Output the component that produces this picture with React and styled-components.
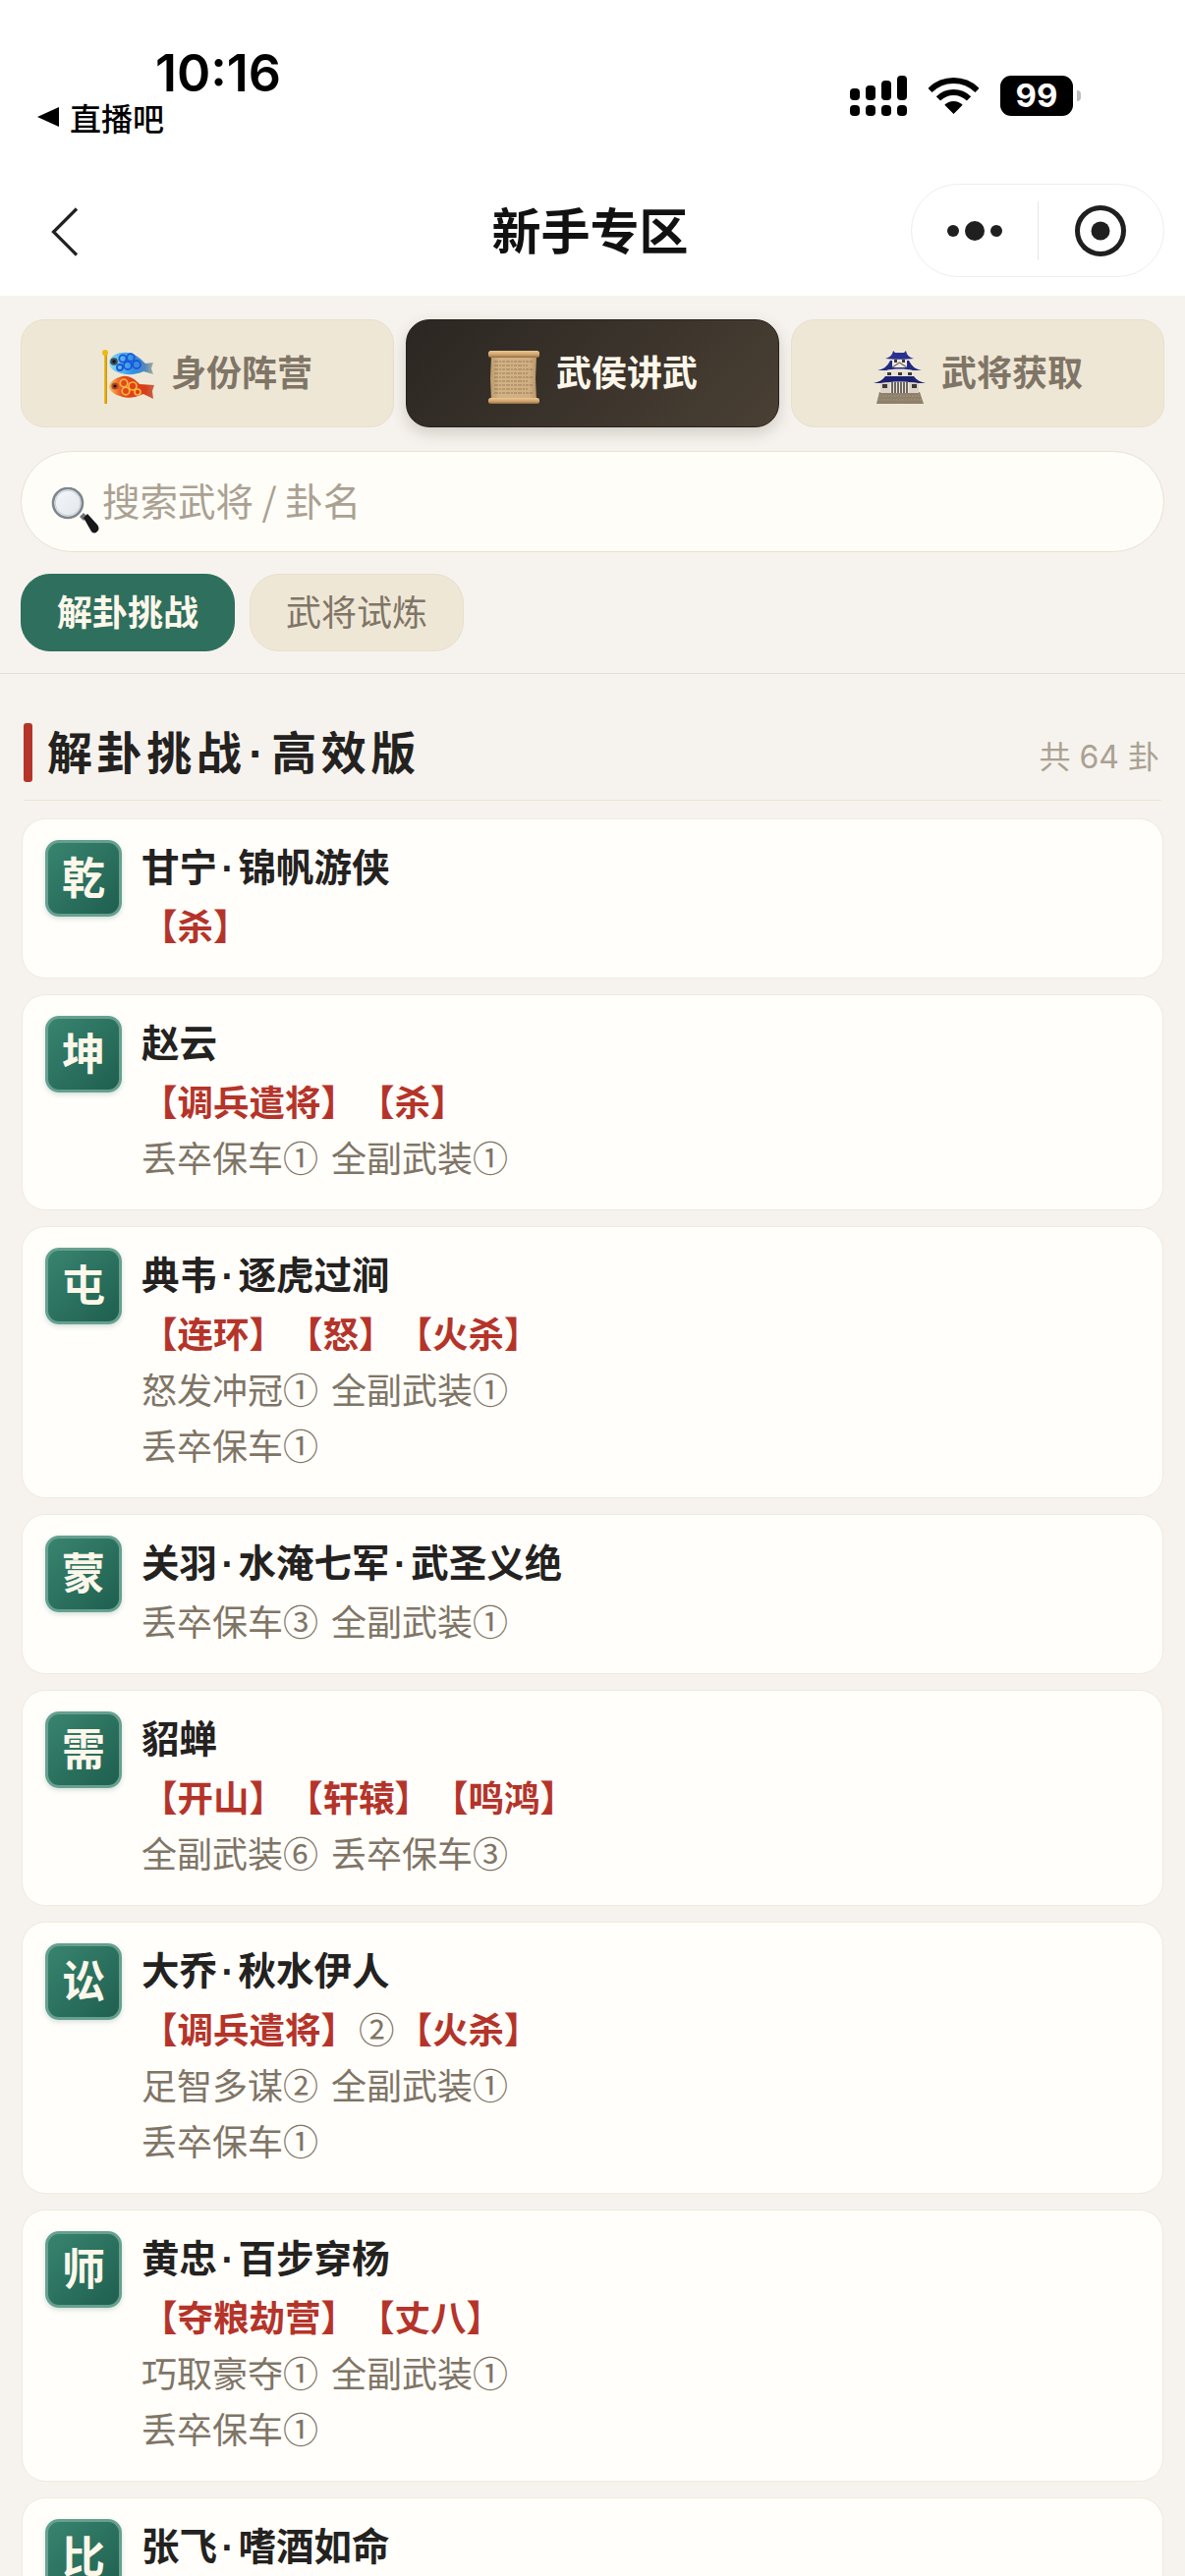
import React from 'react';
import styled, { createGlobalStyle } from 'styled-components';

const CJK = '"Noto Sans CJK SC", "Liberation Sans", sans-serif';
const LATIN = 'Inter, "Noto Sans CJK SC", sans-serif';

const GlobalStyle = createGlobalStyle`
  html, body {
    margin: 0;
    padding: 0;
    background: #f6f3ee;
  }
  #root {
    height: 2622px;
    overflow: hidden;
  }
`;

const Page = styled.div`
  width: 1206px;
  height: 2622px;
  overflow: hidden;
  background: #f6f3ee;
  font-family: ${CJK};
`;

const Header = styled.header`
  background: #fff;
`;

const StatusBar = styled.div`
  height: 170px;
  display: flex;
  justify-content: space-between;
  padding: 0 106px 0 38px;
  color: #000;
`;

const StatusLeft = styled.div`
  padding-top: 50px;
  display: flex;
  flex-direction: column;
`;

const Clock = styled.div`
  font-family: ${LATIN};
  font-size: 52px;
  line-height: 50px;
  font-weight: 600;
  margin-left: 120px;
`;

const BackApp = styled.div`
  display: flex;
  align-items: center;
  gap: 11px;
  margin-top: 3px;
  font-size: 32px;
  line-height: 32px;
  font-weight: 500;
`;

const StatusRight = styled.div`
  padding-top: 77px;
  height: 41px;
  display: flex;
  align-items: center;
`;

const WifiIcon = styled.svg`
  margin: 0 22px;
`;

const Battery = styled.div`
  width: 74px;
  height: 41px;
  border-radius: 11px;
  background: #000;
  color: #fff;
  font-family: ${LATIN};
  font-size: 33px;
  font-weight: 700;
  line-height: 41px;
  text-align: center;
`;

const BatteryNub = styled.div`
  width: 4px;
  height: 11px;
  margin-left: 4px;
  border-radius: 0 6px 6px 0;
  background: #bdbdbd;
`;

const NavBar = styled.nav`
  height: 131px;
  display: grid;
  grid-template-columns: 1fr auto 1fr;
  align-items: center;
  padding: 0 21px;
`;

const BackButton = styled.svg`
  margin-left: 31px;
`;

const NavTitle = styled.h1`
  margin: -7px 5px 0 0;
  font-size: 50px;
  line-height: 60px;
  font-weight: 600;
  color: #111;
`;

const Capsule = styled.div`
  justify-self: end;
  width: 258px;
  height: 95px;
  margin-top: -2px;
  box-sizing: border-box;
  border: 1px solid #eeeeee;
  border-radius: 48px;
  display: grid;
  grid-template-columns: 1fr 1px 1fr;
  align-items: center;
  justify-items: center;
`;

const CapsuleLine = styled.div`
  width: 1px;
  height: 60px;
  background: #e6e6e6;
`;

const FilterPanel = styled.section`
  padding: 24px 21px 22px;
  border-bottom: 1px solid #e6e1d7;
`;

const MainTabs = styled.div`
  display: grid;
  grid-template-columns: repeat(3, 380px);
  gap: 12px;
`;

const MainTab = styled.div`
  height: 110px;
  box-sizing: border-box;
  padding-bottom: 6px;
  border-radius: 24px;
  border: 1px solid ${p => (p.$active ? '#26211c' : '#e8dfcc')};
  background: ${p => (p.$active ? 'linear-gradient(135deg, #2b2622, #4a4034)' : '#efe7d6')};
  box-shadow: ${p => (p.$active ? '0 6px 16px rgba(60, 50, 35, 0.2)' : 'none')};
  color: ${p => (p.$active ? '#fdf7ea' : '#7f7566')};
  display: flex;
  align-items: center;
  justify-content: center;
  gap: 15px;
  font-size: 36px;
  font-weight: 700;
`;

const TabIcon = styled.span`
  display: flex;
  margin-top: 13px;
`;

const SearchBox = styled.div`
  margin-top: 24px;
  height: 103px;
  box-sizing: border-box;
  border: 1px solid #e9e0d0;
  border-radius: 52px;
  background: #fffdf8;
  display: flex;
  align-items: center;
  padding-left: 30px;
`;

const SearchIcon = styled.span`
  display: flex;
  margin: 19px 3px 0 0;
`;

const SearchHint = styled.span`
  font-size: 38.5px;
  line-height: 44px;
  margin-top: -5px;
  color: #aaa192;
`;

const SubTabs = styled.div`
  margin-top: 22px;
  display: flex;
  gap: 15px;
`;

const SubTab = styled.div`
  width: 218px;
  height: 79px;
  box-sizing: border-box;
  padding-bottom: 5px;
  border-radius: 30px;
  border: 1px solid ${p => (p.$active ? '#2f6f5e' : '#e8dfcc')};
  background: ${p => (p.$active ? '#2f6f5e' : '#efe7d6')};
  color: ${p => (p.$active ? '#fdf7ea' : '#7f7566')};
  font-size: 36px;
  font-weight: ${p => (p.$active ? 700 : 400)};
  display: flex;
  align-items: center;
  justify-content: center;
`;

const SectionHead = styled.div`
  margin: 50px 24px 18px;
  padding-bottom: 18px;
  border-bottom: 1px solid #ece3d1;
  display: flex;
  align-items: center;
  justify-content: space-between;
`;

const SectionTitle = styled.h2`
  margin: 0;
  display: flex;
  align-items: center;
  gap: 15px;
  font-size: 46px;
  line-height: 60px;
  font-weight: 700;
  letter-spacing: 4.6px;
  color: #242220;
  &::before {
    content: '';
    width: 9px;
    height: 60px;
    border-radius: 3px;
    background: #b5342a;
  }
`;

const SectionText = styled.span`
  margin-top: -7px;
`;

const SectionCount = styled.span`
  font-family: ${LATIN};
  font-size: 32px;
  margin: 3px 2px 0 0;
  color: #aaa192;
`;

const CardList = styled.div`
  margin: 0 22px;
  display: flex;
  flex-direction: column;
  gap: 16px;
`;

const Card = styled.article`
  box-sizing: border-box;
  border: 1px solid #f1eadc;
  border-radius: 24px;
  background: #fffefb;
  padding: 21px 23px 25px;
  display: grid;
  grid-template-columns: 78px 1fr;
  column-gap: 20px;
  align-items: start;
`;

const Badge = styled.div`
  width: 78px;
  height: 78px;
  box-sizing: border-box;
  padding-bottom: 6px;
  border: 3px solid #67a08f;
  border-radius: 14px;
  background: linear-gradient(135deg, #38846f, #1f5f4f);
  box-shadow: 0 2px 5px rgba(31, 95, 79, 0.2);
  color: #fdf7ea;
  font-size: 44px;
  font-weight: 700;
  display: flex;
  align-items: center;
  justify-content: center;
`;

const CardBody = styled.div`
  min-width: 0;
  margin-top: -2px;
`;

const HeroName = styled.div`
  font-size: 38.5px;
  line-height: 54px;
  font-weight: 700;
  color: #242220;
  margin-bottom: 6px;
`;

// the narrow middle dot between a hero and a title
const NameDot = styled.span`
  display: inline-block;
  width: 0.56em;
  line-height: 1;
  text-align: center;
  font-family: "Liberation Sans", sans-serif;
  font-weight: 700;
`;

const TagRow = styled.div`
  display: flex;
  gap: 2px;
  line-height: 57px;
  font-size: 36.5px;
`;

const Tag = styled.span`
  color: #b5342a;
  font-weight: 700;
`;

const TagCount = styled.span`
  color: #7f7566;
`;

const DetailLine = styled.div`
  font-size: 36px;
  line-height: 57px;
  word-spacing: 5px;
  color: #7f7566;
`;

function DottedName({ text }) {
  const parts = text.split('·');
  return parts.map((part, i) => (
    <React.Fragment key={part}>
      {i > 0 && <NameDot>·</NameDot>}
      {part}
    </React.Fragment>
  ));
}

function SignalIcon() {
  const bars = [
    { x: 0, top: 13 },
    { x: 16, top: 10 },
    { x: 32, top: 5 },
    { x: 48, top: 0 },
  ];
  return (
    <svg width="58" height="41" viewBox="0 0 58 41">
      {bars.map(b => (
        <g key={b.x} fill="#000">
          <rect x={b.x} y={b.top} width="10" height={25 - b.top} rx="4" />
          <rect x={b.x} y="30" width="10" height="11" rx="4" />
        </g>
      ))}
    </svg>
  );
}

function KoiIcon() {
  return (
    <svg width="55" height="55" viewBox="10 10 55 55">
      <defs>
        <linearGradient id="koiBlue" x1="0" y1="0" x2="1" y2="0">
          <stop offset="0" stopColor="#86dcf0" />
          <stop offset="0.55" stopColor="#2f8fe6" />
          <stop offset="0.8" stopColor="#4d86c0" />
          <stop offset="1" stopColor="#a7ab98" />
        </linearGradient>
        <linearGradient id="koiRed" x1="0" y1="0" x2="1" y2="0">
          <stop offset="0" stopColor="#f4c45a" />
          <stop offset="0.3" stopColor="#e8461a" />
          <stop offset="0.8" stopColor="#d83c18" />
          <stop offset="1" stopColor="#c4674a" />
        </linearGradient>
        <linearGradient id="koiPole" x1="0" y1="0" x2="1" y2="0">
          <stop offset="0" stopColor="#f2c521" />
          <stop offset="1" stopColor="#c48f10" />
        </linearGradient>
      </defs>
      <rect x="12" y="14" width="3" height="51" fill="url(#koiPole)" />
      <circle cx="13" cy="13" r="3" fill="#e9bb15" />
      <path d="M17 22 C19 15 28 12 36 13 C44 14 50 20 54 24 L62 23 L60 29 L62 35 L52 32 C44 36 33 36 26 33 C20 31 17 27 17 22 Z" fill="url(#koiBlue)" />
      <g fill="none" stroke="#1a56d8" strokeWidth="1.8">
        <circle cx="31" cy="19" r="3.6" />
        <circle cx="39" cy="18" r="3.8" />
        <circle cx="36" cy="26" r="4" />
        <circle cx="45" cy="25" r="4" />
        <circle cx="28" cy="28" r="3" />
      </g>
      <circle cx="22" cy="22" r="3.8" fill="#3d4b55" />
      <circle cx="22" cy="22" r="1.7" fill="#10161a" />
      <path d="M17 47 C19 41 25 38 31 37 C38 36 43 40 48 45 L63 46 L61 52 L62 60 L52 55 C44 59 35 60 28 57 C21 55 17 51 17 47 Z" fill="url(#koiRed)" />
      <g fill="none" stroke="#f5b73e" strokeWidth="1.7">
        <circle cx="32" cy="44" r="3.8" />
        <circle cx="41" cy="47" r="4" />
        <circle cx="34" cy="52" r="3.8" />
        <circle cx="46" cy="53" r="3" />
      </g>
      <circle cx="23" cy="47" r="3.6" fill="#b2472a" />
      <circle cx="23" cy="47" r="1.6" fill="#301008" />
    </svg>
  );
}

function ScrollIcon() {
  const lines = [21, 25, 29, 33, 37, 41, 45, 49, 53];
  return (
    <svg width="55" height="56" viewBox="9 9 55 56">
      <defs>
        <linearGradient id="scrollRoll" x1="0" y1="0" x2="0" y2="1">
          <stop offset="0" stopColor="#ecc892" />
          <stop offset="0.6" stopColor="#cda06a" />
          <stop offset="1" stopColor="#8f6a40" />
        </linearGradient>
        <linearGradient id="scrollPaper" x1="0" y1="0" x2="1" y2="0">
          <stop offset="0" stopColor="#bd9b6e" />
          <stop offset="0.2" stopColor="#d2b286" />
          <stop offset="0.85" stopColor="#cfae82" />
          <stop offset="1" stopColor="#b8966a" />
        </linearGradient>
      </defs>
      <path d="M13 16 H59 L58 38 L59 60 H13 L12 38 Z" fill="url(#scrollPaper)" />
      <g stroke="#8a6a44" strokeWidth="1" opacity="0.75">
        {lines.map(y => (
          <line key={y} x1="16" y1={y} x2={y % 8 === 1 ? 50 : 55} y2={y} strokeDasharray="4 1 2 1 3 1" />
        ))}
      </g>
      <rect x="10" y="10" width="52" height="7" rx="2.5" fill="url(#scrollRoll)" />
      <rect x="10" y="58" width="52" height="6" rx="2.5" fill="url(#scrollRoll)" />
    </svg>
  );
}

function CastleIcon() {
  return (
    <svg width="55" height="56" viewBox="9 9 55 56">
      <path d="M16 52 L57 52 L61 64 L13 64 Z" fill="#8f806c" />
      <path d="M16 56 H58 M15 60 H59" stroke="#a89a84" strokeWidth="1.2" strokeDasharray="1.5 1.5" />
      <rect x="17" y="42" width="39" height="11" fill="#ddd3c7" />
      <rect x="27" y="41" width="19" height="12" fill="#eee8de" />
      <path d="M29 42 V53 M32 42 V53 M35 42 V53 M38 42 V53 M41 42 V53 M44 42 V53" stroke="#55504c" strokeWidth="1.7" />
      <rect x="19" y="44" width="5" height="4" fill="#3c3836" />
      <rect x="49" y="44" width="5" height="4" fill="#3c3836" />
      <rect x="20" y="29" width="33" height="9" fill="#eae3d9" />
      <path d="M24 32 h4 v3 h-4 z M35 32 h4 v3 h-4 z M45 32 h4 v3 h-4 z" fill="#3c3836" />
      <path d="M10 43 C15 42 19 40 22 36 L51 36 C54 40 58 42 63 43 L56 43 C44 41 29 41 17 43 Z" fill="#1d2270" />
      <path d="M14 30 C20 29 24 26 27 20 L46 20 C49 26 53 29 59 30 L50 30 C44 28 29 28 23 30 Z" fill="#232a82" />
      <rect x="29" y="17" width="15" height="10" fill="#f0eadf" />
      <path d="M31 19 h3 v3 h-3 z M39 19 h3 v3 h-3 z" fill="#3c3836" />
      <path d="M29 27 L36.500 22 L44 27" stroke="#6f6a66" strokeWidth="1.3" fill="none" />
      <path d="M22 18 C26 17 29 15 30 10 L32 12 L41 12 L43 10 C44 15 47 17 51 18 C44 19 29 19 22 18 Z" fill="#2a3090" />
    </svg>
  );
}

function MagnifierIcon() {
  return (
    <svg width="49" height="49" viewBox="0 0 49 49">
      <defs>
        <linearGradient id="lensGlass" x1="0" y1="0" x2="1" y2="1">
          <stop offset="0" stopColor="#f6f8fa" />
          <stop offset="1" stopColor="#dfe6ec" />
        </linearGradient>
      </defs>
      <path d="M29 30 L33 26 L37 30 L33 34 Z" fill="#6e757b" />
      <path d="M33 31 L37 27 L47 38 C49 41 49 43 47 45 C45 47 43 47 41 45 Z" fill="#16181a" />
      <circle cx="17" cy="16" r="15" fill="url(#lensGlass)" stroke="#7d868e" strokeWidth="2.6" />
      <circle cx="17" cy="16" r="12.8" fill="none" stroke="#c9ced3" strokeWidth="1" />
    </svg>
  );
}

const heroes = [
  { gua: '乾', name: '甘宁·锦帆游侠', tags: ['【杀】'], lines: [] },
  { gua: '坤', name: '赵云', tags: ['【调兵遣将】', '【杀】'], lines: ['丢卒保车① 全副武装①'] },
  { gua: '屯', name: '典韦·逐虎过涧', tags: ['【连环】', '【怒】', '【火杀】'], lines: ['怒发冲冠① 全副武装①', '丢卒保车①'] },
  { gua: '蒙', name: '关羽·水淹七军·武圣义绝', tags: [], lines: ['丢卒保车③ 全副武装①'] },
  { gua: '需', name: '貂蝉', tags: ['【开山】', '【轩辕】', '【鸣鸿】'], lines: ['全副武装⑥ 丢卒保车③'] },
  { gua: '讼', name: '大乔·秋水伊人', tags: ['【调兵遣将】', '②', '【火杀】'], lines: ['足智多谋② 全副武装①', '丢卒保车①'] },
  { gua: '师', name: '黄忠·百步穿杨', tags: ['【夺粮劫营】', '【丈八】'], lines: ['巧取豪夺① 全副武装①', '丢卒保车①'] },
  { gua: '比', name: '张飞·嗜酒如命', tags: [], lines: [] },
];

export default function App() {
  return (
    <Page>
      <GlobalStyle />
      <Header>
        <StatusBar>
          <StatusLeft>
            <Clock>10:16</Clock>
            <BackApp>
              <svg width="22" height="20" viewBox="0 0 22 20">
                <path d="M0 10 L22 0 V20 Z" fill="#000" />
              </svg>
              直播吧
            </BackApp>
          </StatusLeft>
          <StatusRight>
            <SignalIcon />
            <WifiIcon width="51" height="37" viewBox="0 0 51 37">
              <path d="M1.46 12.96 A34 34 0 0 1 49.54 12.96" fill="none" stroke="#000" strokeWidth="6" />
              <path d="M9.94 21.44 A22 22 0 0 1 41.06 21.44" fill="none" stroke="#000" strokeWidth="6" />
              <path d="M25.5 37 L16.3 27.8 A13 13 0 0 1 34.7 27.8 Z" fill="#000" />
            </WifiIcon>
            <Battery>99</Battery>
            <BatteryNub />
          </StatusRight>
        </StatusBar>
        <NavBar>
          <BackButton width="28" height="50" viewBox="0 0 28 50">
            <path d="M26 1.5 L2.5 25 L26 48.5" fill="none" stroke="#222" strokeWidth="3.2" />
          </BackButton>
          <NavTitle>新手专区</NavTitle>
          <Capsule>
            <svg width="62" height="22" viewBox="0 0 62 22">
              <circle cx="9" cy="11" r="6" fill="#1f1f1f" />
              <circle cx="31" cy="11" r="10" fill="#1f1f1f" />
              <circle cx="53" cy="11" r="6" fill="#1f1f1f" />
            </svg>
            <CapsuleLine />
            <svg width="52" height="52" viewBox="0 0 52 52">
              <circle cx="26" cy="26" r="23.5" fill="none" stroke="#1f1f1f" strokeWidth="5" />
              <circle cx="26" cy="26" r="9.5" fill="#1f1f1f" />
            </svg>
          </Capsule>
        </NavBar>
      </Header>

      <FilterPanel>
        <MainTabs>
          <MainTab><TabIcon><KoiIcon /></TabIcon>身份阵营</MainTab>
          <MainTab $active><TabIcon><ScrollIcon /></TabIcon>武侯讲武</MainTab>
          <MainTab><TabIcon><CastleIcon /></TabIcon>武将获取</MainTab>
        </MainTabs>
        <SearchBox>
          <SearchIcon><MagnifierIcon /></SearchIcon>
          <SearchHint>搜索武将 / 卦名</SearchHint>
        </SearchBox>
        <SubTabs>
          <SubTab $active>解卦挑战</SubTab>
          <SubTab>武将试炼</SubTab>
        </SubTabs>
      </FilterPanel>

      <SectionHead>
        <SectionTitle>
          <SectionText><DottedName text="解卦挑战·高效版" /></SectionText>
        </SectionTitle>
        <SectionCount>共 64 卦</SectionCount>
      </SectionHead>

      <CardList>
        {heroes.map(h => (
          <Card key={h.gua}>
            <Badge>{h.gua}</Badge>
            <CardBody>
              <HeroName><DottedName text={h.name} /></HeroName>
              {h.tags.length > 0 && (
                <TagRow>
                  {h.tags.map(t => (t.startsWith('【') ? <Tag key={t}>{t}</Tag> : <TagCount key={t}>{t}</TagCount>))}
                </TagRow>
              )}
              {h.lines.map((l, i) => <DetailLine key={i}>{l}</DetailLine>)}
            </CardBody>
          </Card>
        ))}
      </CardList>
    </Page>
  );
}
